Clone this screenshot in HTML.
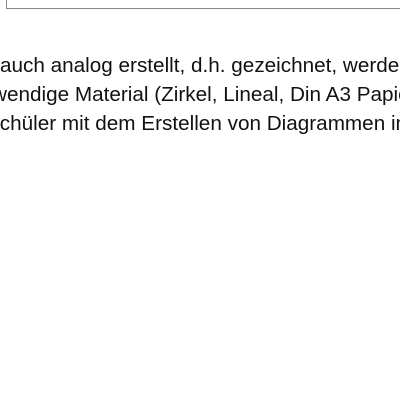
<!DOCTYPE html>
<html><head><style>
html,body{margin:0;width:400px;height:400px;overflow:hidden;background:#fff}
body{position:relative;font-family:"Liberation Sans",sans-serif;color:#111}
.box{position:absolute;left:6px;top:-10px;width:420px;height:17px;border:1px solid #8a8a8a}
.l{position:absolute;white-space:nowrap;font-size:20px;transform-origin:0 0;transform:scaleX(1.035)}
</style></head><body>
<div class="box"></div>
<div class="l" style="left:0;top:55px">auch analog erstellt, d.h. gezeichnet, werden</div>
<div class="l" style="left:-8px;top:84px">wendige Material (Zirkel, Lineal, Din A3 Papier</div>
<div class="l" style="left:-14px;top:113px">Schüler mit dem Erstellen von Diagrammen in</div>
</body></html>
